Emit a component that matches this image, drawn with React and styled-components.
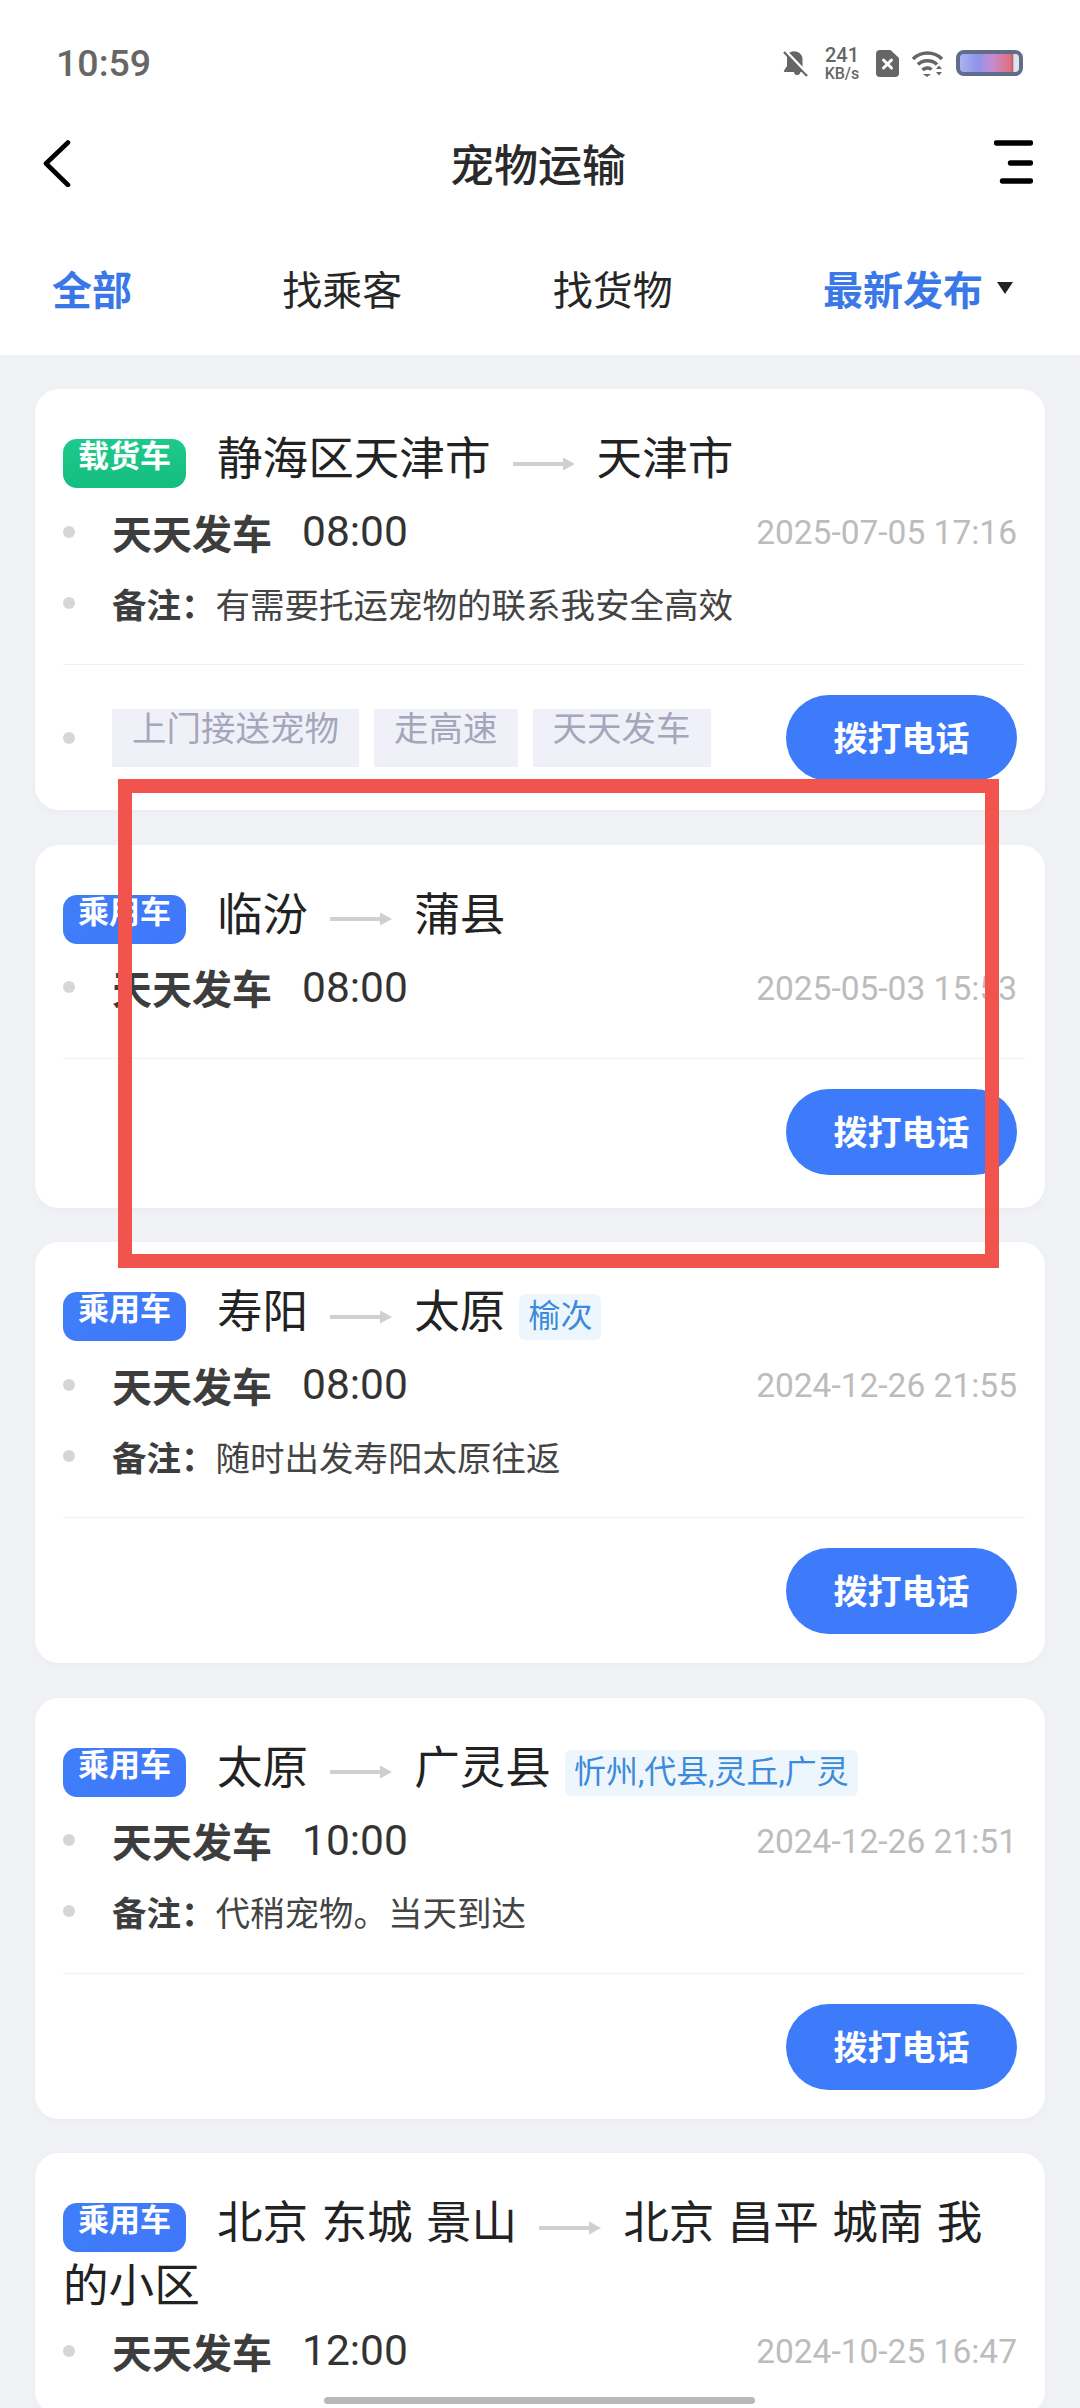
import React from 'react';
import styled, { createGlobalStyle } from 'styled-components';

const Global = createGlobalStyle`
  html, body { margin: 0; padding: 0; background: #f1f2f5; }
  * { box-sizing: border-box; }
`;

const Page = styled.div`
  position: relative;
  width: 1080px;
  height: 2408px;
  overflow: hidden;
  background: #f1f2f5;
  font-family: "Roboto", "Noto Sans CJK SC", sans-serif;
  color: #222;
`;

const Header = styled.header`
  height: 355px;
  background: #fff;
`;

const StatusBar = styled.div`
  height: 126px;
  display: flex;
  align-items: center;
  justify-content: space-between;
  padding: 0 57px 0 56px;
`;
const Clock = styled.span`
  font-size: 37.5px;
  font-weight: 500;
  color: #666;
`;
const StatusIcons = styled.div`
  display: flex;
  align-items: center;
  gap: 12px;
`;
const Speed = styled.div`
  display: flex;
  flex-direction: column;
  align-items: center;
  width: 40px;
  margin: 0 2px;
  color: #666;
  font-size: 20px;
  line-height: 20px;
  font-weight: 500;
  small {
    font-size: 16px;
    line-height: 17px;
    font-weight: 500;
  }
`;
const Battery = styled.div`
  width: 67px;
  height: 26px;
  border: 4px solid #616c8b;
  border-radius: 8px;
  background: linear-gradient(90deg, #a9b4ee 0%, #8f93ec 30%, #c88bd0 55%, #e0707e 85%, #b06070 90%, #dfe3f0 91%);
`;

const Nav = styled.nav`
  height: 74px;
  display: flex;
  align-items: center;
  justify-content: space-between;
  padding: 0 47px 0 43px;
`;
const Title = styled.h1`
  margin: 0;
  font-size: 44px;
  font-weight: 500;
  color: #2a2a2a;
`;

const Tabs = styled.div`
  height: 134px;
  margin-top: 21px;
  display: flex;
  align-items: center;
  justify-content: space-between;
  padding: 0 67px 0 52px;
`;
const Tab = styled.span`
  display: inline-flex;
  align-items: center;
  gap: 14px;
  font-size: 40px;
  font-weight: ${p => (p.$active ? 700 : 400)};
  color: ${p => (p.$active ? '#3b78e7' : '#262626')};
`;
const Caret = styled.i`
  width: 0;
  height: 0;
  border-left: 8px solid transparent;
  border-right: 8px solid transparent;
  border-top: 12px solid #222;
`;

const List = styled.main`
  display: flex;
  flex-direction: column;
  gap: 34.5px;
  padding: 34px 35px 0;
`;
const Card = styled.article`
  flex: none;
  background: #fff;
  border-radius: 24px;
  padding: 39px 28px ${p => (p.$loose ? 33 : 29)}px;
  box-shadow: 0 2px 10px rgba(120, 125, 150, 0.05);
`;
const Route = styled.div`
  font-size: 45.6px;
  line-height: 63px;
  color: #222;
  word-spacing: 2px;
  margin-bottom: ${p => (p.$wrapped ? -3 : 5)}px;
`;
const Tag = styled.span`
  display: inline-block;
  vertical-align: middle;
  width: 123px;
  height: 49px;
  margin: 2px 31px 0 0;
  border-radius: 14px;
  background: ${p => (p.$cargo ? 'linear-gradient(180deg, #1ec98c, #14bd80)' : 'linear-gradient(135deg, #3f7ef8, #3f78fb)')};
  color: #fff;
  font-size: 31px;
  font-weight: 700;
  line-height: 36px;
  text-align: center;
  word-spacing: 0;
`;
const ArrowWrap = styled.span`
  display: inline-block;
  vertical-align: middle;
  width: 62px;
  height: 14px;
  margin: 0 22px 0 22px;
  line-height: 0;
`;
const Via = styled.span`
  display: inline-block;
  vertical-align: middle;
  height: 46px;
  margin: 3px 0 0 14px;
  padding: 0 9px;
  border-radius: 6px;
  background: #eef6fd;
  color: #3c8bd9;
  font-size: 32px;
  line-height: 44px;
  word-spacing: 0;
`;

const Row = styled.div`
  height: 71px;
  display: flex;
  align-items: center;
`;
const Dot = styled.i`
  flex: none;
  width: 12px;
  height: 12px;
  margin-right: 37px;
  border-radius: 50%;
  background: #d6d6d8;
`;
const Freq = styled.b`
  font-size: 40px;
  font-weight: 700;
  color: #3d3d3d;
`;
const Time = styled.span`
  margin-left: 30px;
  font-size: 42.5px;
  color: #333;
`;
const DateText = styled.span`
  margin: 2px 0 0 auto;
  font-size: 33.5px;
  color: #bcbcbc;
`;
const Note = styled.span`
  font-size: 34.5px;
  color: #444;
  b { font-weight: 700; color: #3d3d3d; }
`;
const Divider = styled.hr`
  height: 1px;
  margin: ${p => (p.$wide ? 35 : 26)}px -8px 0 0;
  border: 0;
  background: #f1f1f3;
`;
const Footer = styled.div`
  display: flex;
  align-items: center;
  justify-content: flex-end;
  padding-top: 30px;
`;
const FeatureList = styled.div`
  display: flex;
  align-items: center;
  margin-right: auto;
`;
const Features = styled.div`
  display: flex;
  gap: 15px;
`;
const Feature = styled.span`
  height: 58px;
  padding: 0 20px;
  background: #f0f1f8;
  color: #a5a6bb;
  font-size: 34.5px;
  line-height: 40px;
`;
const CallButton = styled.button`
  width: 231px;
  height: 86px;
  border: 0;
  border-radius: 43px;
  background: #3d7bfa;
  color: #fff;
  font-family: inherit;
  font-size: 34px;
  font-weight: 700;
  padding: 0 0 3px;
`;

const RedFrame = styled.div`
  position: absolute;
  left: 118px;
  top: 779px;
  width: 881px;
  height: 489px;
  border: 14px solid #f0544c;
  pointer-events: none;
`;
const HomeBar = styled.div`
  position: absolute;
  left: 324px;
  bottom: 4px;
  width: 431px;
  height: 7px;
  border-radius: 4px;
  background: #b8b8b8;
`;

const Arrow = () => (
  <ArrowWrap>
    <svg width="62" height="14" viewBox="0 0 62 14">
      <rect x="0" y="5" width="52" height="4" fill="#cfcfcf" />
      <path d="M50 0.5 L62 7 L50 13.5 Z" fill="#cfcfcf" />
    </svg>
  </ArrowWrap>
);

const Bell = () => (
  <svg width="26" height="27" viewBox="0 0 26 27">
    <path d="M13 1c-5 0-8 3.6-8 8.5V16l-3 4.5c-.4.7 0 1.5.8 1.5h9.2c0 2.2 2 3.5 4 3 1.4-.3 2.2-1.5 2.4-3h3.6L5.5 4.5" fill="#666" />
    <path d="M7 3 C9 1.5 18 -1 20.5 8 V17 L7 3Z" fill="#666" />
    <path d="M2 2 L25 26" stroke="#666" strokeWidth="2.4" />
    <path d="M5 2 L25 23" stroke="#fff" strokeWidth="2" />
  </svg>
);

const Sim = () => (
  <svg width="23" height="27" viewBox="0 0 23 27">
    <path d="M4 0h10.5L23 8v15a4 4 0 0 1-4 4H4a4 4 0 0 1-4-4V4a4 4 0 0 1 4-4Z" fill="#666" />
    <path d="M7.5 10 L15.5 18 M15.5 10 L7.5 18" stroke="#fff" strokeWidth="3" strokeLinecap="round" />
  </svg>
);

const Wifi = () => (
  <svg width="33" height="27" viewBox="0 0 33 27">
    <path d="M2 9 C10 1 23 1 31 9" fill="none" stroke="#666" strokeWidth="3.6" />
    <path d="M7 14.5 C12 9.5 21 9.5 26 14.5" fill="none" stroke="#666" strokeWidth="3.6" />
    <path d="M11.5 20 C14 17.5 18.5 17.5 20.5 19.5" fill="none" stroke="#666" strokeWidth="3.4" />
    <path d="M12 24 L20 24 L16 27 Z" fill="#666" />
    <path d="M25 19 L28 15.5 L31 19 Z M25 22 L31 22 L28 25.5 Z" fill="#666" />
  </svg>
);

const Back = () => (
  <svg width="39" height="47" viewBox="0 0 39 47">
    <path d="M25 2.5 L3 23.5 L25 45" fill="none" stroke="#000" strokeWidth="4.6" strokeLinecap="round" strokeLinejoin="round" />
  </svg>
);

const Menu = () => (
  <svg width="39" height="46" viewBox="0 0 39 46">
    <path d="M2.5 3h34M16.5 23h20M8.5 41h28" stroke="#000" strokeWidth="5.4" strokeLinecap="round" />
  </svg>
);

const Dial = () => <CallButton>拨打电话</CallButton>;

export default function App() {
  return (
    <Page>
      <Global />
      <Header>
        <StatusBar>
          <Clock>10:59</Clock>
          <StatusIcons>
            <Bell />
            <Speed>241<small>KB/s</small></Speed>
            <Sim />
            <Wifi />
            <Battery />
          </StatusIcons>
        </StatusBar>
        <Nav>
          <Back />
          <Title>宠物运输</Title>
          <Menu />
        </Nav>
        <Tabs>
          <Tab $active>全部</Tab>
          <Tab>找乘客</Tab>
          <Tab>找货物</Tab>
          <Tab $active>最新发布<Caret /></Tab>
        </Tabs>
      </Header>
      <List>
        <Card>
          <Route><Tag $cargo>载货车</Tag>静海区天津市<Arrow />天津市</Route>
          <Row><Dot /><Freq>天天发车</Freq><Time>08:00</Time><DateText>2025-07-05 17:16</DateText></Row>
          <Row><Dot /><Note><b>备注：</b>有需要托运宠物的联系我安全高效</Note></Row>
          <Divider />
          <Footer>
            <FeatureList>
              <Dot />
              <Features>
                <Feature>上门接送宠物</Feature>
                <Feature>走高速</Feature>
                <Feature>天天发车</Feature>
              </Features>
            </FeatureList>
            <Dial />
          </Footer>
        </Card>
        <Card $loose>
          <Route><Tag>乘用车</Tag>临汾<Arrow />蒲县</Route>
          <Row><Dot /><Freq>天天发车</Freq><Time>08:00</Time><DateText>2025-05-03 15:53</DateText></Row>
          <Divider $wide />
          <Footer><Dial /></Footer>
        </Card>
        <Card>
          <Route><Tag>乘用车</Tag>寿阳<Arrow />太原<Via>榆次</Via></Route>
          <Row><Dot /><Freq>天天发车</Freq><Time>08:00</Time><DateText>2024-12-26 21:55</DateText></Row>
          <Row><Dot /><Note><b>备注：</b>随时出发寿阳太原往返</Note></Row>
          <Divider />
          <Footer><Dial /></Footer>
        </Card>
        <Card>
          <Route><Tag>乘用车</Tag>太原<Arrow />广灵县<Via>忻州,代县,灵丘,广灵</Via></Route>
          <Row><Dot /><Freq>天天发车</Freq><Time>10:00</Time><DateText>2024-12-26 21:51</DateText></Row>
          <Row><Dot /><Note><b>备注：</b>代稍宠物。当天到达</Note></Row>
          <Divider />
          <Footer><Dial /></Footer>
        </Card>
        <Card>
          <Route $wrapped><Tag>乘用车</Tag>北京 东城 景山<Arrow />北京 昌平 城南 我的小区</Route>
          <Row><Dot /><Freq>天天发车</Freq><Time>12:00</Time><DateText>2024-10-25 16:47</DateText></Row>
        </Card>
      </List>
      <RedFrame />
      <HomeBar />
    </Page>
  );
}
